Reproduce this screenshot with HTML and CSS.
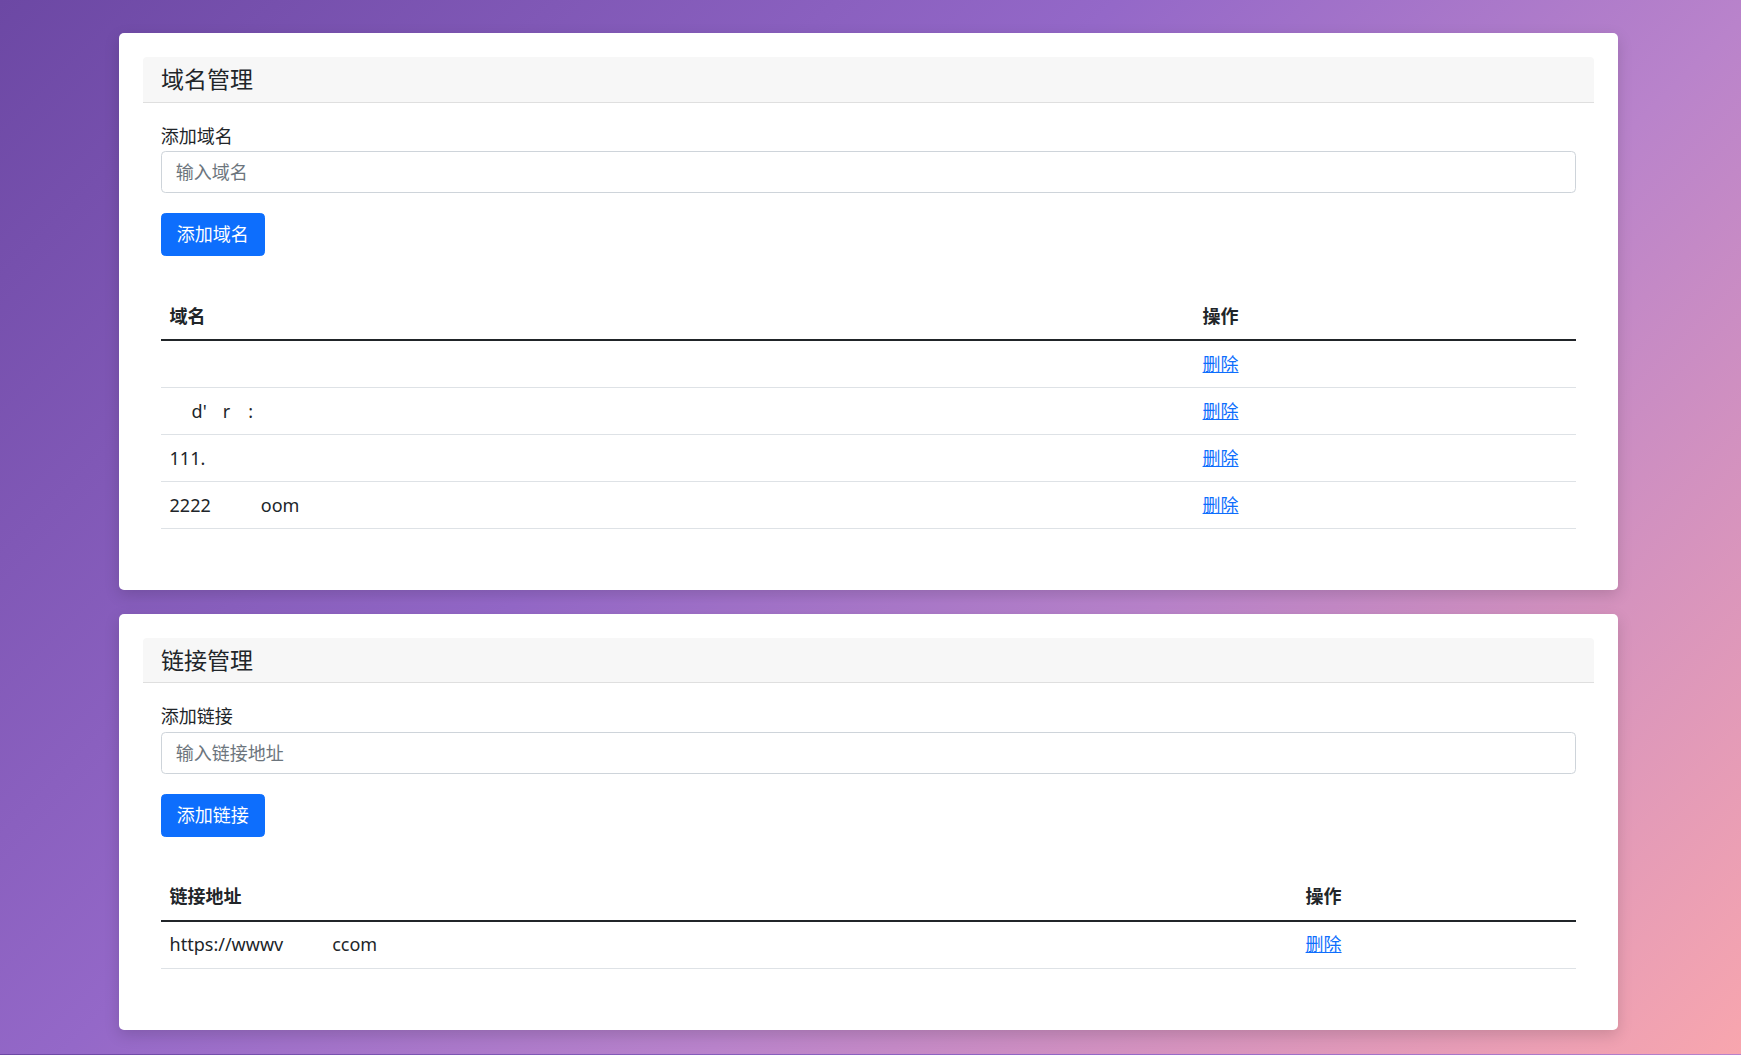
FILE: index.html
```html
<!DOCTYPE html>
<html lang="zh-CN">
<head>
<meta charset="utf-8">
<title>管理</title>
<link rel="stylesheet" href="styles.css">
</head>
<body>
<div class="container">
  <section class="panel">
    <div class="card">
      <div class="card-header"><h5 class="card-title">域名管理</h5></div>
      <div class="card-body">
        <label class="form-label" for="domain">添加域名</label>
        <input class="form-control" id="domain" type="text" placeholder="输入域名">
        <button class="btn" type="button">添加域名</button>
        <table class="table">
          <thead>
            <tr><th class="col-domain">域名</th><th>操作</th></tr>
          </thead>
          <tbody>
            <tr><td></td><td><a href="#">删除</a></td></tr>
            <tr><td><span class="gap g22"></span>d'<span class="gap g16"></span>r<span class="gap g18"></span>:</td><td><a href="#">删除</a></td></tr>
            <tr><td>111.</td><td><a href="#">删除</a></td></tr>
            <tr><td>2222<span class="gap g50"></span>oom</td><td><a href="#">删除</a></td></tr>
          </tbody>
        </table>
      </div>
    </div>
  </section>

  <section class="panel">
    <div class="card">
      <div class="card-header"><h5 class="card-title">链接管理</h5></div>
      <div class="card-body">
        <label class="form-label" for="link">添加链接</label>
        <input class="form-control" id="link" type="text" placeholder="输入链接地址">
        <button class="btn" type="button">添加链接</button>
        <table class="table">
          <thead>
            <tr><th class="col-link">链接地址</th><th>操作</th></tr>
          </thead>
          <tbody>
            <tr><td>https://wwwv<span class="gap g49"></span>ccom</td><td><a href="#">删除</a></td></tr>
          </tbody>
        </table>
      </div>
    </div>
  </section>
</div>
</body>
</html>
```

FILE: styles.css
```css
html, body {
  margin: 0;
  padding: 0;
}

body {
  background: linear-gradient(135deg, #6c48a4 0%, #9468c8 40%, #b983cb 63%, #f8a6ae 100%);
  font-family: "Noto Sans", "Noto Sans CJK SC", sans-serif;
  font-size: 18px;
  line-height: 26.6px;
  color: #212529;
}

.container {
  width: 1499px;
  margin-left: 119px;
  padding: 33px 0 24px;
  display: flex;
  flex-direction: column;
  gap: 23.6px;
}

.panel {
  background: #ffffff;
  border-radius: 5px;
  padding: 24px;
  box-shadow: 0 5px 15px rgba(0, 0, 0, 0.15);
}

.card {
  display: flex;
  flex-direction: column;
}

.card-header {
  background: #f7f7f7;
  border-bottom: 1px solid #dfdfdf;
  padding: 9px 18px;
  border-radius: 4px 4px 0 0;
}

.card-title {
  margin: 0;
  font-size: 23px;
  font-weight: 400;
  line-height: 26.6px;
  color: #212529;
}

.card-body {
  padding: 20px 17.7px 17.7px;
  display: flex;
  flex-direction: column;
  align-items: flex-start;
}

.form-label {
  display: block;
  margin-bottom: 2.2px;
  line-height: 26.6px;
}

.form-control {
  box-sizing: border-box;
  width: 100%;
  height: 42px;
  padding: 0 14px;
  border: 1px solid #ced4da;
  border-radius: 4.4px;
  font-family: inherit;
  font-size: 18px;
  color: #212529;
  background: #fff;
  margin: 0 0 19.6px;
}

.form-control::placeholder {
  color: #6c757d;
  opacity: 1;
}

.btn {
  box-sizing: border-box;
  height: 43.4px;
  padding: 0 15px;
  border: 1px solid #0d6efd;
  border-radius: 4.4px;
  background: #0d6efd;
  color: #ffffff;
  font-family: inherit;
  font-size: 18px;
  line-height: 27px;
  margin: 0 0 36.6px;
}

.table {
  width: 100%;
  table-layout: fixed;
  border-collapse: collapse;
  margin-bottom: 19.7px;
  color: #212529;
}

.table th,
.table td {
  text-align: left;
  padding: 9.7px 8.9px;
  line-height: 26.6px;
  vertical-align: top;
  white-space: nowrap;
  overflow: hidden;
}

.table th {
  font-weight: 700;
  border-bottom: 2px solid #212529;
}

.table td {
  border-bottom: 1px solid #dee2e6;
  height: 26.6px;
}

.col-domain {
  width: 1033px;
  box-sizing: border-box;
}

.col-link {
  width: 1136px;
  box-sizing: border-box;
}

.table a {
  color: #0d6efd;
  text-decoration: underline;
}

.gap {
  display: inline-block;
  height: 1px;
}

.g16 { width: 16px; }
.g18 { width: 18px; }
.g22 { width: 22px; }
.g49 { width: 49px; }
.g50 { width: 50px; }
```
